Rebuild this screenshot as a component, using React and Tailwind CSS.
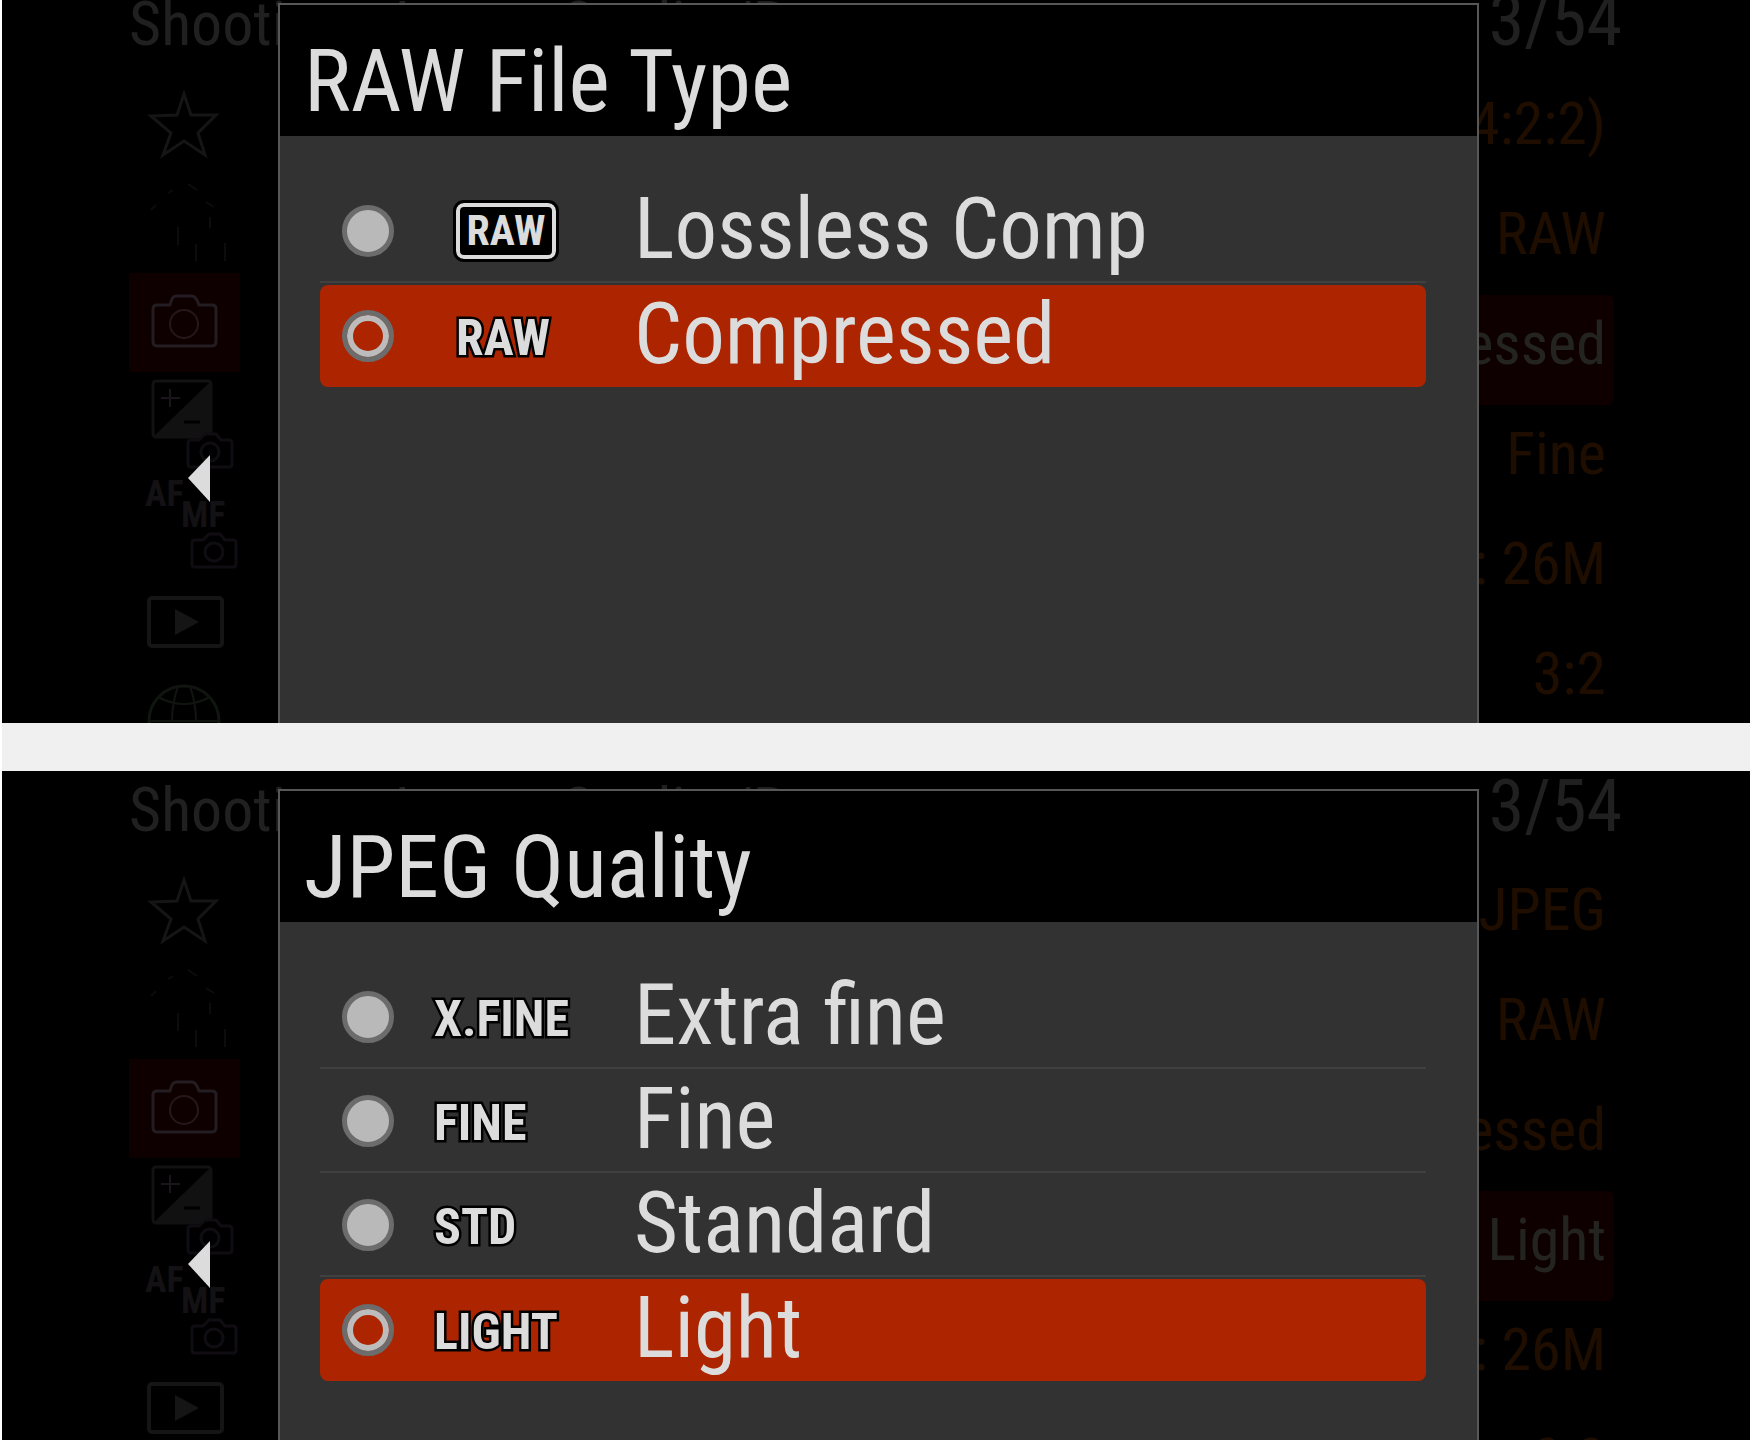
import React, { useState } from "react";
import clsx from "clsx";

const screens = [
  {
    id: "raw-file-type",
    title: "RAW File Type",
    initial: "compressed",
    options: [
      { value: "lossless", icon: "RAW", boxed: true, centered: true, label: "Lossless Comp" },
      { value: "compressed", icon: "RAW", centered: true, label: "Compressed" },
    ],
    values: ["HEIF(4:2:2)", "RAW", "Compressed", "Fine", "L: 26M", "3:2"],
    activeValue: 2,
    className: "h-[723px] shrink-0",
  },
  {
    id: "jpeg-quality",
    title: "JPEG Quality",
    initial: "light",
    options: [
      { value: "xfine", icon: "X.FINE", label: "Extra fine" },
      { value: "fine", icon: "FINE", label: "Fine" },
      { value: "standard", icon: "STD", label: "Standard" },
      { value: "light", icon: "LIGHT", label: "Light" },
    ],
    values: ["JPEG", "RAW", "Compressed", "Light", "L: 26M", "3:2"],
    activeValue: 3,
    className: "min-h-0 flex-1 pt-[15px]",
  },
];

const TabIcon = ({ children }) => (
  <svg
    viewBox="0 0 111 99"
    className="h-full w-full"
    fill="none"
    stroke="#151515"
    strokeWidth="3"
    strokeLinejoin="round"
    aria-hidden="true"
  >
    {children}
  </svg>
);

const SmallCamera = ({ x, y }) => (
  <g transform={`translate(${x} ${y})`} stroke="#100d12" fill="#000">
    <path d="M4 7H12L18 1H29L34 7H42Q45 7 45 10V31Q45 34 42 34H4Q1 34 1 31V10Q1 7 4 7Z" />
    <circle cx="23" cy="19" r="9" />
  </g>
);

const tabs = [
  {
    name: "My Menu",
    icon: (
      <TabIcon>
        <path d="M55 19L62 40H87L69 58L76 80L55 66L34 80L42 58L22 41L48 40Z" strokeLinejoin="miter" />
      </TabIcon>
    ),
  },
  {
    name: "Main",
    icon: (
      <TabIcon>
        <path
          d="M22 36L27 31M39 19L44 16M59 10L68 16M77 28L85 33M81 43V54M49 53V71M67 70V87M96 69V87"
          stroke="#0c0c0c"
          strokeWidth="2"
        />
      </TabIcon>
    ),
  },
  {
    name: "Shooting",
    active: true,
    icon: (
      <TabIcon>
        <path d="M28 32H41Q43 23 47 23H63Q67 23 70 32H83Q87 32 87 36V68Q87 73 83 73H28Q24 73 24 68V36Q24 32 28 32Z" stroke="#231d22" />
        <circle cx="55" cy="51" r="14" stroke="#24181b" strokeWidth="2" />
      </TabIcon>
    ),
  },
  {
    name: "Exposure/Color",
    icon: (
      <TabIcon>
        <rect x="24" y="9" width="58" height="56" rx="3" stroke="#131113" />
        <path d="M82 9V65H24Z" fill="#111" stroke="none" />
        <path d="M32 26H51M41 17V35" stroke="#1a151a" strokeWidth="2" />
        <path d="M55 50H71" stroke="#000" />
        <SmallCamera x="58" y="61" />
      </TabIcon>
    ),
  },
  {
    name: "Focus",
    icon: (
      <TabIcon>
        <g fill="#131113" stroke="none" className="text-[36px] font-bold">
          <text x="16" y="35">AF</text>
          <text x="52" y="56">MF</text>
        </g>
        <SmallCamera x="62" y="62" />
      </TabIcon>
    ),
  },
  {
    name: "Playback",
    icon: (
      <TabIcon>
        <rect x="20" y="28" width="73" height="48" rx="3" strokeWidth="4" />
        <path d="M46 39L70 52L46 65Z" fill="#151515" stroke="none" />
      </TabIcon>
    ),
  },
  {
    name: "Network",
    icon: (
      <TabIcon>
        <g stroke="#101510">
          <circle cx="55" cy="52" r="35" />
          <path d="M49 17Q43 35 43 52M61 17Q67 35 67 52M29 28Q55 42 81 28M20 52H90" strokeWidth="2" />
        </g>
      </TabIcon>
    ),
  },
];

const MenuBackdrop = ({ values, activeValue }) => (
  <div>
    <div className="flex h-[75px] items-baseline justify-between pr-[128px] pl-[127px] leading-[42px] text-[#202020]">
      <div className="flex gap-12 text-[62px] whitespace-nowrap">
        <span>Shooting</span>
        <span>Image Quality/Rec</span>
      </div>
      <span className="text-[72px]">3/54</span>
    </div>

    <div className="flex items-start justify-between pr-[136px] pl-[127px]">
      <nav className="w-[111px]">
        {tabs.map((tab) => (
          <button
            key={tab.name}
            type="button"
            aria-label={tab.name}
            className={clsx("block h-[99px] w-full", tab.active && "bg-[#0f0000]")}
          >
            {tab.icon}
          </button>
        ))}
      </nav>

      <ul className="w-[400px] text-right text-[60px] whitespace-nowrap text-[#1f0e00]">
        {values.map((value, i) => (
          <li
            key={value}
            className={clsx(
              "flex h-[110px] items-center justify-end rounded-md pr-2 pb-3",
              i === activeValue && "bg-[#0f0000] text-[#232320]"
            )}
          >
            {value}
          </li>
        ))}
      </ul>
    </div>
  </div>
);

const OptionIcon = ({ option }) => (
  <span className={clsx("flex w-[200px] items-center", option.centered && "pl-[22px]")}>
    {option.boxed ? (
      <span className="flex h-[56px] w-[100px] items-center justify-center rounded-lg border-4 border-[#dcdcdc] bg-black text-[42px] font-bold outline-3 outline-black">
        {option.icon}
      </span>
    ) : (
      <span className="pt-1 text-[50px] font-bold [-webkit-text-stroke:5px_#000] [paint-order:stroke_fill]">
        {option.icon}
      </span>
    )}
  </span>
);

const CameraScreen = ({ screen }) => {
  const [selected, setSelected] = useState(screen.initial);

  return (
    <section className={clsx("relative overflow-hidden bg-black", screen.className)}>
      <MenuBackdrop values={screen.values} activeValue={screen.activeValue} />

      {/* Settings dialog on top of the dimmed menu */}
      <div
        className={clsx(
          "absolute right-[271px] bottom-0 left-[276px] border-2 border-b-0 border-[#575757] bg-[#323232] text-[#dcdcdc]",
          screen.id === "jpeg-quality" ? "top-[18px]" : "top-[3px]"
        )}
      >
        <h2 id={screen.id} className="h-[131px] bg-black pt-[26px] pl-6 text-[88px] leading-[100px] whitespace-nowrap">
          {screen.title}
        </h2>

        <ul role="radiogroup" aria-labelledby={screen.id} className="pt-[43px] pr-[51px] pl-10">
          {screen.options.map((option, i) => {
            const isSelected = selected === option.value;
            return (
              <li
                key={option.value}
                className={clsx(
                  "h-[104px] pt-[2px]",
                  i < screen.options.length - 1 && "border-b-2 border-[#404040]"
                )}
              >
                <label
                  className={clsx(
                    "flex h-full items-center rounded-lg pl-[22px] leading-none whitespace-nowrap",
                    isSelected && "bg-[#ac2500]"
                  )}
                >
                  <input
                    type="radio"
                    name={screen.id}
                    value={option.value}
                    checked={isSelected}
                    onChange={() => setSelected(option.value)}
                    className="mr-10 size-[52px] shrink-0 appearance-none rounded-full border-5 border-[#6c6c6c] bg-[#b9b9b9] checked:bg-transparent checked:shadow-[inset_0_0_0_6px_#bcbcbc]"
                  />
                  <OptionIcon option={option} />
                  <span className="pb-1 text-[85px]">{option.label}</span>
                </label>
              </li>
            );
          })}
        </ul>
      </div>

      <button
        type="button"
        aria-label="Back"
        className={clsx("absolute left-[186px]", screen.id === "jpeg-quality" ? "top-[470px]" : "top-[455px]")}
      >
        <svg viewBox="0 0 22 47" className="h-[47px] w-[22px]" fill="#dcdcdc" aria-hidden="true">
          <path d="M22 0V47L0 23Z" />
        </svg>
      </button>
    </section>
  );
};

const App = () => {
  return (
    <main className="flex h-screen flex-col gap-12 overflow-hidden border-l-2 border-white bg-[#f0f0f0] font-['Roboto_Condensed','Roboto',sans-serif]">
      {screens.map((screen) => (
        <CameraScreen key={screen.id} screen={screen} />
      ))}
    </main>
  );
};

export default App;
